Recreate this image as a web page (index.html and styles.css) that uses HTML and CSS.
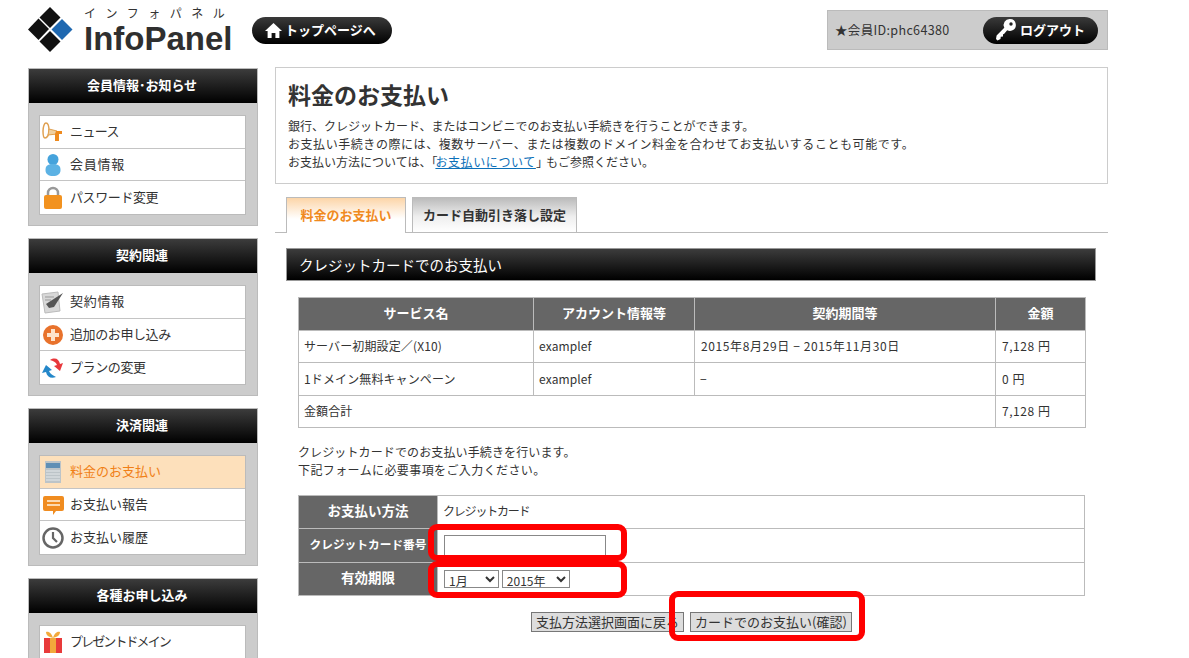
FILE: index.html
```html
<!DOCTYPE html>
<html lang="ja">
<head>
<meta charset="utf-8">
<title>InfoPanel</title>
<link rel="stylesheet" href="styles.css">
</head>
<body>
<div class="page">
  <header class="top">
    <div class="logo">
      <svg class="logo-mark" width="46" height="46" viewBox="0 0 46 46">
        <path d="M22 0l10.500 10.500L22 21 11.500 10.500z" fill="#111"/>
        <path d="M10.500 11.500L21 22 10.500 33 0 22.500z" fill="#111"/>
        <path d="M34 12l10.500 10.500L34 33 23.500 22.500z" fill="#1f68b0"/>
        <path d="M22 24l10.500 10.500L22 45 11.500 34.500z" fill="#111"/>
      </svg>
      <div class="logo-text">
        <div class="logo-kana">インフォパネル</div>
        <div class="logo-name">InfoPanel</div>
      </div>
    </div>
    <a class="pill pill-home">
      <svg width="19" height="17" viewBox="0 0 19 17"><path d="M9.500 1L1 9h2.600v7h4v-5h3.800v5h4V9H18z" fill="#fff"/></svg>
      <span>トップページへ</span>
    </a>
    <div class="member">
      <span class="member-id">★会員ID:phc64380</span>
      <a class="pill pill-logout">
        <svg width="22" height="24" viewBox="0 0 22 24"><path d="M15 1a6 6 0 0 1 2 11.600c-1.700.6-3.400.4-4.800-.4L9 16l-1 .2v2.300l-2.200.3-.3 2.200-3 1.500L1 21l.6-3.500 7.700-7.700A6 6 0 0 1 15 1z" fill="#fff"/><circle cx="16" cy="6" r="1.700" fill="#222"/></svg>
        <span>ログアウト</span>
      </a>
    </div>
  </header>

  <div class="columns">
    <aside class="side">
      <section class="side-box">
        <h2 class="side-head">会員情報･お知らせ</h2>
        <ul class="side-list">
          <li class="side-row">
            <svg class="ic" width="24" height="24" viewBox="0 0 24 24"><path d="M5 3c2 0 3 4 3 8s-2 7-4 7-2-4-2-7 1-8 3-8z" fill="#fff" stroke="#e0a050" stroke-width="1.500"/><path d="M8 9l8 2v3l-9 1z" fill="#f0d0a0" stroke="#e0a050"/><path d="M15 11h6v3h-3v7h-4v-7z" fill="#ee8a1e"/></svg>
            <span class="tight-a">ニュース</span></li>
          <li class="side-row">
            <svg class="ic" width="24" height="24" viewBox="0 0 24 24"><circle cx="12" cy="6.500" r="5.500" fill="#45a3dc"/><path d="M12 11c6 0 7.500 2.500 7.500 6 0 4-3 6-7.500 6s-7.500-2-7.500-6c0-3.500 1.500-6 7.500-6z" fill="#5cb2e4"/></svg>
            <span class="wide-a">会員情報</span></li>
          <li class="side-row">
            <svg class="ic" width="24" height="24" viewBox="0 0 24 24"><path d="M7 11V7a5 5 0 0 1 10 0v4" fill="none" stroke="#999" stroke-width="2.500"/><rect x="3" y="9" width="18" height="14" rx="2" fill="#f2921f"/></svg>
            <span class="tight-b">パスワード変更</span></li>
        </ul>
      </section>
      <section class="side-box">
        <h2 class="side-head">契約関連</h2>
        <ul class="side-list">
          <li class="side-row">
            <svg class="ic" width="24" height="24" viewBox="0 0 24 24"><path d="M1 4l16-2 2 19-15 2z" fill="#d8d8d8" stroke="#bbb"/><path d="M5 14L22 3l-9 14-5 1z" fill="#555"/><path d="M4 7h9M4 10h6" stroke="#999"/></svg>
            <span class="wide-a">契約情報</span></li>
          <li class="side-row">
            <svg class="ic" width="24" height="24" viewBox="0 0 24 24"><circle cx="12" cy="12" r="10" fill="#e8722c"/><path d="M10 6h4v4h4v4h-4v4h-4v-4H6v-4h4z" fill="#fde3cc"/></svg>
            <span class="tight-b">追加のお申し込み</span></li>
          <li class="side-row">
            <svg class="ic" width="24" height="24" viewBox="0 0 24 24"><path d="M9 4c5-3 9-1 10 4l3-1-3 8-6-5 3-1c-1-3-4-4-7-5z" fill="#e8383c"/><path d="M15 21c-5 2-9 0-10-5l-4 1 4-8 6 5-3 1c1 3 4 4 7 6z" fill="#2487c9"/></svg>
            <span class="tight-b">プランの変更</span></li>
        </ul>
      </section>
      <section class="side-box">
        <h2 class="side-head">決済関連</h2>
        <ul class="side-list">
          <li class="side-row side-row-on">
            <svg class="ic" width="24" height="24" viewBox="0 0 24 24"><rect x="4" y="1" width="16" height="22" fill="#bcc4c8"/><rect x="5" y="3" width="14" height="5" fill="#5f8fb5"/><path d="M5 11h14M5 14h14M5 17h14M5 20h14" stroke="#e4e8ea"/></svg>
            料金のお支払い</li>
          <li class="side-row">
            <svg class="ic" width="24" height="24" viewBox="0 0 24 24"><path d="M4 3h17a2 2 0 0 1 2 2v11a2 2 0 0 1-2 2h-6l-3 4v-4H4a2 2 0 0 1-2-2V5a2 2 0 0 1 2-2z" fill="#f08c20"/><path d="M6 8h13M6 12h13" stroke="#fff3e0" stroke-width="1.500"/></svg>
            お支払い報告</li>
          <li class="side-row">
            <svg class="ic" width="24" height="24" viewBox="0 0 24 24"><circle cx="12" cy="12" r="9.500" fill="#fff" stroke="#666" stroke-width="2.500"/><path d="M12 6v6l4 4" fill="none" stroke="#666" stroke-width="2.200"/></svg>
            お支払い履歴</li>
        </ul>
      </section>
      <section class="side-box">
        <h2 class="side-head">各種お申し込み</h2>
        <ul class="side-list">
          <li class="side-row">
            <svg class="ic" width="24" height="24" viewBox="0 0 24 24"><rect x="3" y="8" width="18" height="15" fill="#e83a3a"/><rect x="9" y="8" width="6" height="15" fill="#f2a93b"/><path d="M12 8C9 7 5 6 5 2c3-1 6 2 7 6 1-4 4-7 7-6 0 4-4 5-7 6z" fill="#f2a93b"/></svg>
            <span class="tight-c">プレゼントドメイン</span></li>
        </ul>
      </section>
    </aside>

    <main class="main">
      <section class="intro">
        <h1 class="intro-title">料金のお支払い</h1>
        <p class="intro-text">銀行、クレジットカード、またはコンビニでのお支払い手続きを行うことができます。<br><span class="line-wide">お支払い手続きの際には、複数サーバー、または複数のドメイン料金を合わせてお支払いすることも可能です。</span><br>お支払い方法については、<span class="quote">「</span><a class="link">お支払いについて</a><span class="quote">」</span>もご参照ください。</p>
      </section>

      <nav class="tabs">
        <a class="tab tab-on">料金のお支払い</a>
        <a class="tab tab-off">カード自動引き落し設定</a>
      </nav>

      <h2 class="bar">クレジットカードでのお支払い</h2>

      <table class="grid">
        <colgroup><col class="c1"><col class="c2"><col class="c3"><col class="c4"></colgroup>
        <tr><th>サービス名</th><th>アカウント情報等</th><th>契約期間等</th><th>金額</th></tr>
        <tr><td>サーバー初期設定／(X10)</td><td>examplef</td><td class="date">2015年8月29日 − 2015年11月30日</td><td class="yen">7,128 円</td></tr>
        <tr><td>1ドメイン無料キャンペーン</td><td>examplef</td><td>−</td><td class="yen">0 円</td></tr>
        <tr><td colspan="3">金額合計</td><td class="yen">7,128 円</td></tr>
      </table>

      <p class="note">クレジットカードでのお支払い手続きを行います。<br><span class="line-wide-b">下記フォームに必要事項をご入力ください。</span></p>

      <div class="form-wrap">
        <table class="grid form">
          <colgroup><col class="f1"><col></colgroup>
          <tr><th>お支払い方法</th><td class="tight-d">クレジットカード</td></tr>
          <tr><th class="th-tight">クレジットカード番号</th><td><input class="card" type="text"></td></tr>
          <tr><th>有効期限</th><td><select class="sel sel-m"><option>1月</option></select> <select class="sel sel-y"><option>2015年</option></select></td></tr>
        </table>
        <div class="actions">
          <button class="btn btn-back" type="button">支払方法選択画面に戻る</button>
          <button class="btn btn-next" type="button">カードでのお支払い(確認)</button>
        </div>
        <span class="mark mark-card"></span>
        <span class="mark mark-date"></span>
        <span class="mark mark-btn"></span>
      </div>
    </main>
  </div>
</div>
</body>
</html>
```
FILE: styles.css
```css
html, body { margin: 0; padding: 0; height: 658px; overflow: hidden; background: #fff; }
body { font-family: "Noto Sans CJK JP", "Liberation Sans", sans-serif; font-size: 12px; color: #333; }
* { box-sizing: border-box; }
.page { width: 1108px; height: 658px; overflow: hidden; padding-left: 28px; }

.top { display: flex; align-items: flex-start; height: 67px; }
.logo { display: flex; width: 224px; padding-top: 7px; }
.logo-mark { flex: none; }
.logo-text { margin-left: 10px; width: 150px; }
.logo-kana { height: 17px; margin-top: -1px; font-size: 12px; line-height: 14px; letter-spacing: 9.500px; color: #333; white-space: nowrap; }
.logo-name { margin-top: 1px; font-family: "Liberation Sans", sans-serif; font-weight: 700; font-size: 33px; line-height: 30px; color: #2f2f2f; white-space: nowrap; }
.pill { display: flex; align-items: center; height: 27px; padding-bottom: 2px; border-radius: 14px; background: linear-gradient(#3a3a3a, #000); color: #fff; font-weight: 700; white-space: nowrap; }
.pill svg { margin-top: 2px; }
.pill-home { width: 140px; margin-top: 17px; padding-left: 12px; gap: 2px; font-size: 13px; }
.member { display: flex; align-items: center; width: 281px; height: 40px; margin-top: 10px; margin-left: auto; padding-left: 7px; background: #ccc; border: 1px solid #bbb; }
.member-id { width: 148px; padding-bottom: 1px; font-size: 12.500px; letter-spacing: .35px; white-space: nowrap; }
.pill-logout { width: 115px; padding-left: 12px; gap: 3px; font-size: 13px; }

.columns { display: flex; gap: 17px; align-items: flex-start; }
.side { width: 230px; margin-top: 1px; }
.side-box { height: 158px; margin-bottom: 12px; background: #ccc; border: 1px solid #bbb; }
.side-head { height: 34px; margin: 0; padding-right: 2px; background: linear-gradient(#3c3c3c, #000); color: #fff; font-size: 13px; font-weight: 700; line-height: 31px; text-align: center; }
.side-list { list-style: none; margin: 12px 11px 0 10px; padding: 0; background: #fff; border: 1px solid #bbb; }
.side-row { display: flex; align-items: center; height: 32.700px; padding: 0 0 3px 1px; gap: 5px; font-size: 13px; border-bottom: 1px solid #c4c4c4; }
.side-row .ic { margin-top: 3px; }
.side-row:last-child { border-bottom: 0; }
.side-row-on { background: #fde0bb; color: #f07f16; }
.ic { flex: none; }
.tight-a { letter-spacing: -.6px; }
.wide-a { letter-spacing: .75px; }
.tight-b { letter-spacing: -.4px; }
.tight-c { letter-spacing: -1.900px; }

.main { width: 833px; }
.intro { height: 117px; padding: 11px 12px; border: 1px solid #ccc; }
.intro-title { margin: 0 0 8px; font-size: 23px; font-weight: 700; line-height: 30px; color: #333; }
.intro-text { margin: 0; font-size: 12px; line-height: 18px; }
.line-wide { letter-spacing: .56px; }
.quote { letter-spacing: -2px; }
.link { color: #0b6fb8; text-decoration: underline; letter-spacing: .6px; }
.tabs { display: flex; gap: 6px; height: 36px; margin-top: 13px; padding-left: 11px; border-bottom: 1px solid #bbb; }
.tab { display: block; height: 35px; border: 1px solid #bbb; border-bottom: 0; color: #333; font-size: 13px; font-weight: 700; line-height: 33px; text-align: center; white-space: nowrap; }
.tab-off { width: 165px; background: linear-gradient(#bbb, #eee 55%, #fff); }
.tab-on { width: 120px; height: 36px; background: linear-gradient(#fcd5a8, #fff 60%); color: #f08a1e; }
.bar { width: 810px; height: 33px; margin: 15px 0 0 11px; padding-left: 12px; background: linear-gradient(#3c3c3c, #000); border: 1px solid #999; color: #fff; font-size: 14.500px; font-weight: 400; line-height: 31px; }

.grid { width: 787px; margin-left: 23px; border-collapse: collapse; table-layout: fixed; }
.grid th, .grid td { height: 32.500px; padding: 0 5px; border: 1px solid #bbb; font-size: 12px; line-height: 16px; letter-spacing: .12px; white-space: nowrap; }
.grid th { padding-bottom: 2px; background: #666; color: #fff; font-size: 13px; font-weight: 700; text-align: center; letter-spacing: 0; }
.grid td { background: #fff; }
.grid .date { letter-spacing: .62px; padding-left: 6px; }
.grid .yen { letter-spacing: .55px; padding-left: 6px; }
.main > .grid { margin-top: 16px; }
.c1 { width: 235px; }
.c2 { width: 161px; }
.c3 { width: 301px; }
.c4 { width: 90px; }
.note { margin: 15px 0 0 23px; font-size: 12px; line-height: 18px; letter-spacing: .12px; }
.line-wide-b { letter-spacing: .4px; }

.form-wrap { position: relative; margin-top: 16px; }
.form { margin-top: 0; }
.f1 { width: 139px; }
.form th, .form td { height: 33.300px; }
.grid.form th { padding-bottom: 4px; font-size: 13.500px; }
.grid.form .th-tight { padding: 0 0 3px; font-size: 11.700px; }
.grid.form .tight-d { padding-bottom: 2px; letter-spacing: -1.200px; }
.card { display: block; width: 162px; height: 21px; margin-left: 1px; padding: 0 2px; border: 1px solid #888; background: #fff; }
.sel { height: 18px; padding: 0; border: 1px solid #888; background: #fff; font-family: inherit; font-size: 12px; color: #333; vertical-align: middle; }
.sel-m { width: 55px; margin-left: 1px; }
.sel-y { width: 68px; }
.actions { display: flex; justify-content: center; gap: 6px; margin: 16px 0 0 23px; width: 787px; }
.btn { height: 20px; padding: 0; border: 1px solid #777; background: #ddd; color: #333; font-family: inherit; font-size: 13px; line-height: 18px; white-space: nowrap; }
.btn-back { width: 153px; }
.btn-next { width: 162px; }
.mark { position: absolute; border: 6px solid #f00; border-radius: 9px; }
.mark-card { left: 153px; top: 29px; width: 199px; height: 37px; }
.mark-date { left: 153px; top: 66px; width: 199px; height: 37px; }
.mark-btn { left: 394px; top: 96px; width: 196px; height: 50px; }
```
